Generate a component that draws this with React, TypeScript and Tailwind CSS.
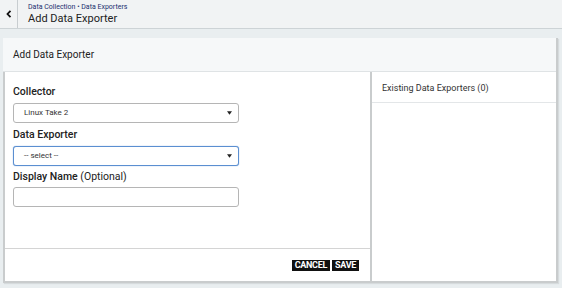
import React from "react";

function Caret() {
  return (
    <svg width="5" height="4" viewBox="0 0 5 4" className="shrink-0">
      <path d="M0 0.3h5L2.5 3.8z" fill="#222" />
    </svg>
  );
}

function SelectBox({ value, active }: { value: string; active?: boolean }) {
  return (
    <div
      className={`flex h-[20px] w-[226px] items-center justify-between rounded-[3px] border bg-white pl-[10px] pr-[6px] text-[8px] text-[#333] ${
        active ? "border-[#5b8fd1] shadow-[0_0_1px_#5b8fd1]" : "border-[#b5b5b5]"
      }`}
    >
      <span>{value}</span>
      <Caret />
    </div>
  );
}

export default function App() {
  return (
    <div className="h-[288px] w-[562px] overflow-hidden bg-[#e9eef0] font-['Roboto',sans-serif] text-[#222]">
      {/* Top bar */}
      <div className="flex h-[29px] border-b border-[#cdd3d6] bg-[#f1f3f4]">
        <div className="flex w-[18px] items-center justify-center border-r border-[#c8cdd0]">
          <svg width="6" height="8" viewBox="0 0 6 8">
            <path d="M4.5 0.8L1.5 4l3 3.2" stroke="#111" strokeWidth="1.8" fill="none" />
          </svg>
        </div>
        <div className="pl-[10px] pt-[3px]">
          <div className="text-[7px] leading-[9px] text-[#1c2f6e]">Data Collection • Data Exporters</div>
          <div className="text-[11px] leading-[14px] text-[#222]">Add Data Exporter</div>
        </div>
      </div>

      {/* Panel */}
      <div className="ml-[3px] mt-[9px] w-[555px] border-r-2 border-b-2 border-[#c9cccd] bg-white shadow-[1px_1px_1px_rgba(0,0,0,0.08)]">
        <div className="flex h-[34px] items-center border-b border-[#dfe3e5] bg-[#f6f8f9] pl-[10px] text-[10px] text-[#222]">
          Add Data Exporter
        </div>
        <div className="flex h-[209px]">
          <div className="flex w-[369px] flex-col border-l-2 border-r-2 border-[#c9cccd]">
            <div className="flex-1 px-[8px] pt-[13px]">
              <div className="text-[10.5px] font-medium leading-[13px]">Collector</div>
              <div className="mt-[5px]">
                <SelectBox value="Linux Take 2" />
              </div>
              <div className="mt-[5px] text-[10.5px] font-medium leading-[13px]">Data Exporter</div>
              <div className="mt-[5px]">
                <SelectBox value="-- select --" active />
              </div>
              <div className="mt-[4px] text-[10.5px] font-medium leading-[13px]">
                Display Name <span className="font-normal">(Optional)</span>
              </div>
              <div className="mt-[4px] h-[20px] w-[226px] rounded-[3px] border border-[#b5b5b5] bg-white" />
            </div>
            <div className="flex h-[33px] items-start justify-end gap-[2px] border-t border-[#d4d4d4] pr-[11px] pt-[11px]">
              <button className="bg-[#111] px-[3px] text-[9px] font-bold leading-[11px] tracking-[-0.3px] text-white">
                CANCEL
              </button>
              <button className="bg-[#111] px-[3px] text-[9px] font-bold leading-[11px] tracking-[-0.3px] text-white">
                SAVE
              </button>
            </div>
          </div>
          <div className="flex-1">
            <div className="flex h-[31px] items-center border-b border-[#e3e6e8] pl-[10px] pt-[3px] text-[9px] text-[#333]">
              Existing Data Exporters (0)
            </div>
          </div>
        </div>
      </div>
    </div>
  );
}
